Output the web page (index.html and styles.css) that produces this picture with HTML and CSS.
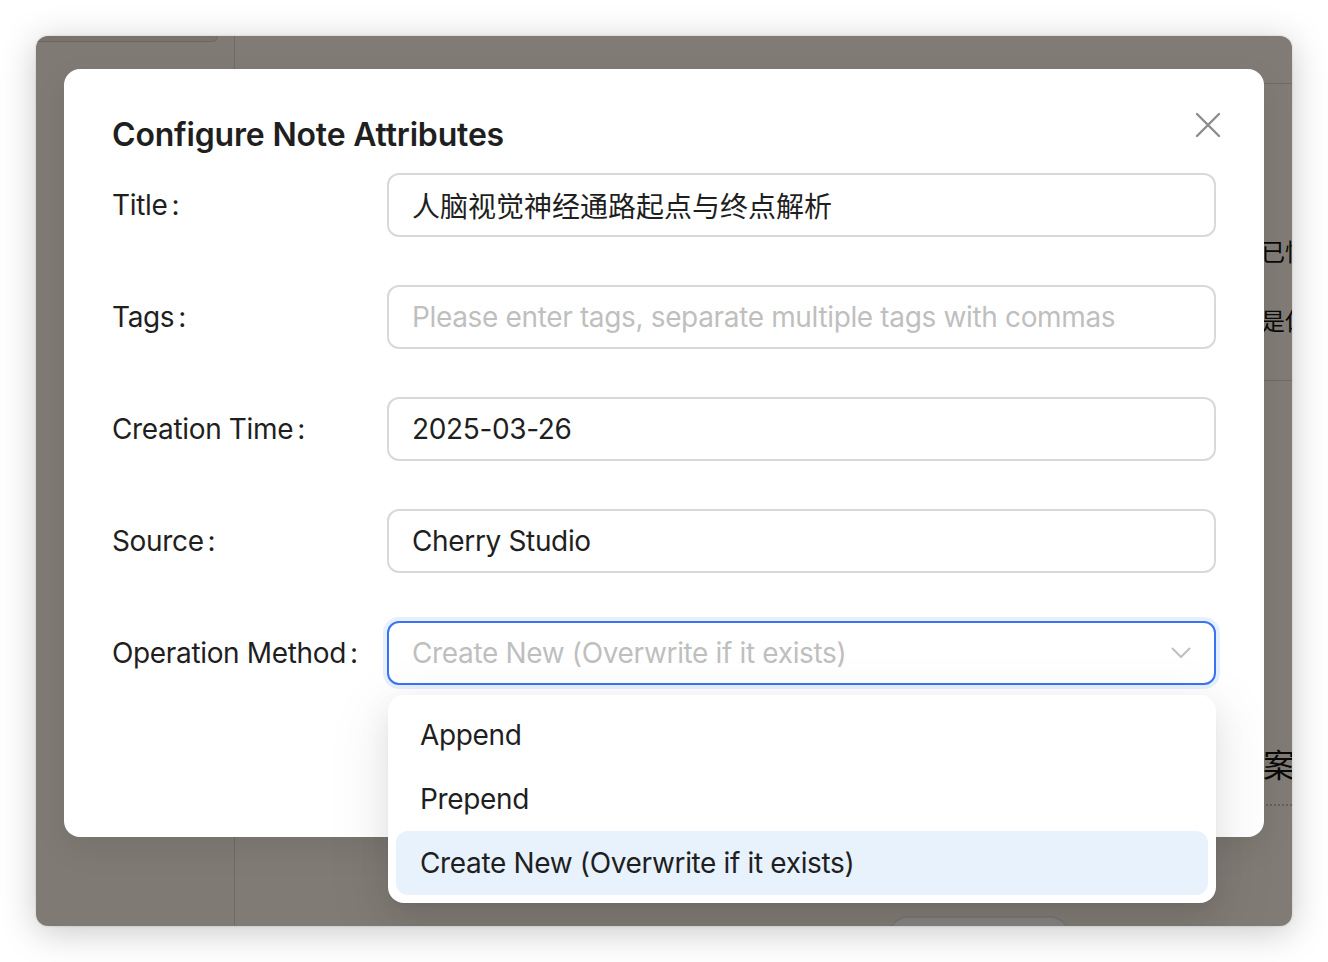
FILE: index.html
```html
<!DOCTYPE html>
<html lang="en">
<head>
<meta charset="utf-8">
<title>Configure Note Attributes</title>
<link rel="stylesheet" href="styles.css">
</head>
<body>
<div class="page">
  <div class="window">
    <div class="app">
      <aside class="sidebar"><div class="side-tab"></div></aside>
      <main class="main">
        <header class="main-header"></header>
        <section class="content">
          <p class="line line-a">视觉通路是指光信号从视网膜传至大脑视觉皮层的神经传导路径，我们目前对此都已忆</p>
          <p class="line line-b">视网膜中的感光细胞负责接收光线刺激，这些神经冲动随后被传递到视觉皮层，这是佐</p>
          <div class="divider"></div>
          <p class="line line-c">以上内容为根据资料整理而成关于人脑视觉神经通路的解析，备选方案</p>
          <div class="dotted"></div>
        </section>
        <footer class="main-footer"><div class="pill"></div></footer>
      </main>
    </div>
    <div class="mask"></div>

    <div class="modal">
      <button class="close" aria-label="Close">
        <svg width="26" height="26" viewBox="0 0 26 26"><path d="M2 2 L24 24 M24 2 L2 24" stroke="#8c8c8c" stroke-width="2.4" stroke-linecap="round" fill="none"/></svg>
      </button>
      <h1 class="modal-title">Configure Note Attributes</h1>
      <form class="form">
        <div class="form-row">
          <label class="form-label">Title</label>
          <input class="field field-cjk" type="text" value="人脑视觉神经通路起点与终点解析">
        </div>
        <div class="form-row">
          <label class="form-label">Tags</label>
          <input class="field" type="text" placeholder="Please enter tags, separate multiple tags with commas">
        </div>
        <div class="form-row">
          <label class="form-label">Creation Time</label>
          <input class="field" type="text" value="2025-03-26">
        </div>
        <div class="form-row">
          <label class="form-label">Source</label>
          <input class="field" type="text" value="Cherry Studio">
        </div>
        <div class="form-row">
          <label class="form-label">Operation Method</label>
          <div class="select">
            <span class="select-placeholder">Create New (Overwrite if it exists)</span>
            <svg class="chevron" width="20" height="12" viewBox="0 0 20 12"><path d="M1.5 1.5 L10 10 L18.5 1.5" stroke="#bfbfbf" stroke-width="2" fill="none" stroke-linecap="round" stroke-linejoin="round"/></svg>
          </div>
        </div>
      </form>
      <div class="modal-footer">
        <button class="btn">Cancel</button>
        <button class="btn btn-primary">OK</button>
      </div>
    </div>

    <div class="dropdown">
      <div class="option">Append</div>
      <div class="option">Prepend</div>
      <div class="option option-active">Create New (Overwrite if it exists)</div>
    </div>
  </div>
</div>
</body>
</html>
```

FILE: styles.css
```css
* { box-sizing: border-box; }

html, body {
  margin: 0;
  padding: 0;
  background: #ffffff;
  font-family: Inter, "Noto Sans", "Noto Sans CJK SC", sans-serif;
}

.page {
  width: 1328px;
  height: 962px;
  padding: 36px;
}

.window {
  position: relative;
  width: 1256px;
  height: 890px;
  border-radius: 12px;
  overflow: hidden;
  box-shadow: 0 6px 36px rgba(0, 0, 0, 0.22), 0 0 2px rgba(0, 0, 0, 0.2);
}

/* ---------- background app ---------- */
.app {
  display: flex;
  width: 100%;
  height: 100%;
  background: #e9e1d5;
}

.sidebar {
  width: 199px;
  flex: none;
  border-right: 1px solid #cbc3b6;
  background: #e8e0d3;
}

.side-tab {
  width: 182px;
  height: 6px;
  border-bottom: 1px solid #c4bcae;
  border-right: 1px solid #c4bcae;
  border-bottom-right-radius: 10px;
  background: #dcd3c4;
}

.main {
  flex: 1;
  display: flex;
  flex-direction: column;
  min-width: 0;
}

.main-header {
  height: 48px;
  flex: none;
  border-bottom: 1px solid #cbc3b6;
}

.content {
  padding-top: 145px;
}

.line {
  margin: 0;
  white-space: nowrap;
  font-family: "Noto Sans CJK SC", sans-serif;
  font-size: 24px;
  line-height: 44px;
  color: #111;
}

.line-a { margin-left: 162px; }
.line-b { margin-left: 162px; margin-top: 25px; }

.divider {
  margin-top: 38px;
  height: 1px;
  background: #cbc3b6;
}

.line-c {
  margin-top: 360px;
  margin-left: 68px;
  font-size: 32px;
}

.dotted {
  margin-top: 19px;
  border-top: 2px dotted #b9b1a4;
}

.main-footer {
  padding: 110px 0 0 653px;
}

.pill {
  width: 182px;
  height: 40px;
  border-radius: 20px;
  background: #f3f1ef;
  border: 2px solid #ddd8d2;
}

.mask {
  position: absolute;
  inset: 0;
  background: rgba(0, 0, 0, 0.45);
}

/* ---------- modal ---------- */
.modal {
  position: absolute;
  left: 28px;
  top: 33px;
  width: 1200px;
  height: 768px;
  padding: 40px 48px;
  background: #ffffff;
  border-radius: 16px;
  box-shadow: 0 12px 32px rgba(0, 0, 0, 0.08);
}

.close {
  position: absolute;
  top: 43px;
  right: 43px;
  width: 26px;
  height: 26px;
  padding: 0;
  border: 0;
  background: none;
  display: flex;
}

.modal-title {
  margin: 2px 0 14px;
  font-size: 32px;
  line-height: 48px;
  font-weight: 600;
  color: #1f1f1f;
  letter-spacing: -0.18px;
}

.form { margin: 0; }

.form-row {
  display: grid;
  grid-template-columns: 275px 1fr;
  align-items: center;
  margin-bottom: 48px;
}

.form-label {
  font-size: 28px;
  letter-spacing: -0.35px;
  color: #1f1f1f;
  line-height: 64px;
  white-space: nowrap;
}

.form-label::after {
  content: ":";
  margin-left: 4px;
}

.field {
  display: block;
  width: 100%;
  height: 64px;
  margin: 0;
  padding: 0 23px;
  border: 2px solid #d9d9d9;
  border-radius: 12px;
  font-family: Inter, "Noto Sans CJK SC", sans-serif;
  font-size: 28px;
  letter-spacing: -0.35px;
  color: #1f1f1f;
  background: #ffffff;
  outline: none;
}

.field-cjk { letter-spacing: 0; }

.field::placeholder { color: #bfbfbf; }

.select {
  display: flex;
  align-items: center;
  justify-content: space-between;
  height: 64px;
  padding: 0 23px 0 23px;
  border: 2px solid #3b74f2;
  border-radius: 12px;
  box-shadow: 0 0 0 4px rgba(5, 110, 255, 0.1);
  background: #ffffff;
}

.select-placeholder {
  font-size: 28px;
  letter-spacing: -0.35px;
  color: #bfbfbf;
}

.chevron { flex: none; }

.modal-footer {
  display: flex;
  justify-content: flex-end;
  gap: 16px;
}

.btn {
  height: 64px;
  padding: 0 30px;
  border: 2px solid #d9d9d9;
  border-radius: 12px;
  background: #fff;
  font: 28px Inter, sans-serif;
  color: #1f1f1f;
}

.btn-primary {
  background: #1677ff;
  border-color: #1677ff;
  color: #fff;
}

/* ---------- dropdown ---------- */
.dropdown {
  position: absolute;
  left: 352px;
  top: 659px;
  width: 828px;
  padding: 8px;
  background: #ffffff;
  border-radius: 16px;
  box-shadow: 0 12px 32px rgba(0, 0, 0, 0.08), 0 6px 12px -8px rgba(0, 0, 0, 0.12), 0 18px 56px 16px rgba(0, 0, 0, 0.05);
}

.option {
  height: 64px;
  padding: 0 24px;
  border-radius: 12px;
  font-size: 28px;
  letter-spacing: -0.35px;
  line-height: 64px;
  color: #1f1f1f;
}

.option-active {
  background: #e7f2fd;
}
```
